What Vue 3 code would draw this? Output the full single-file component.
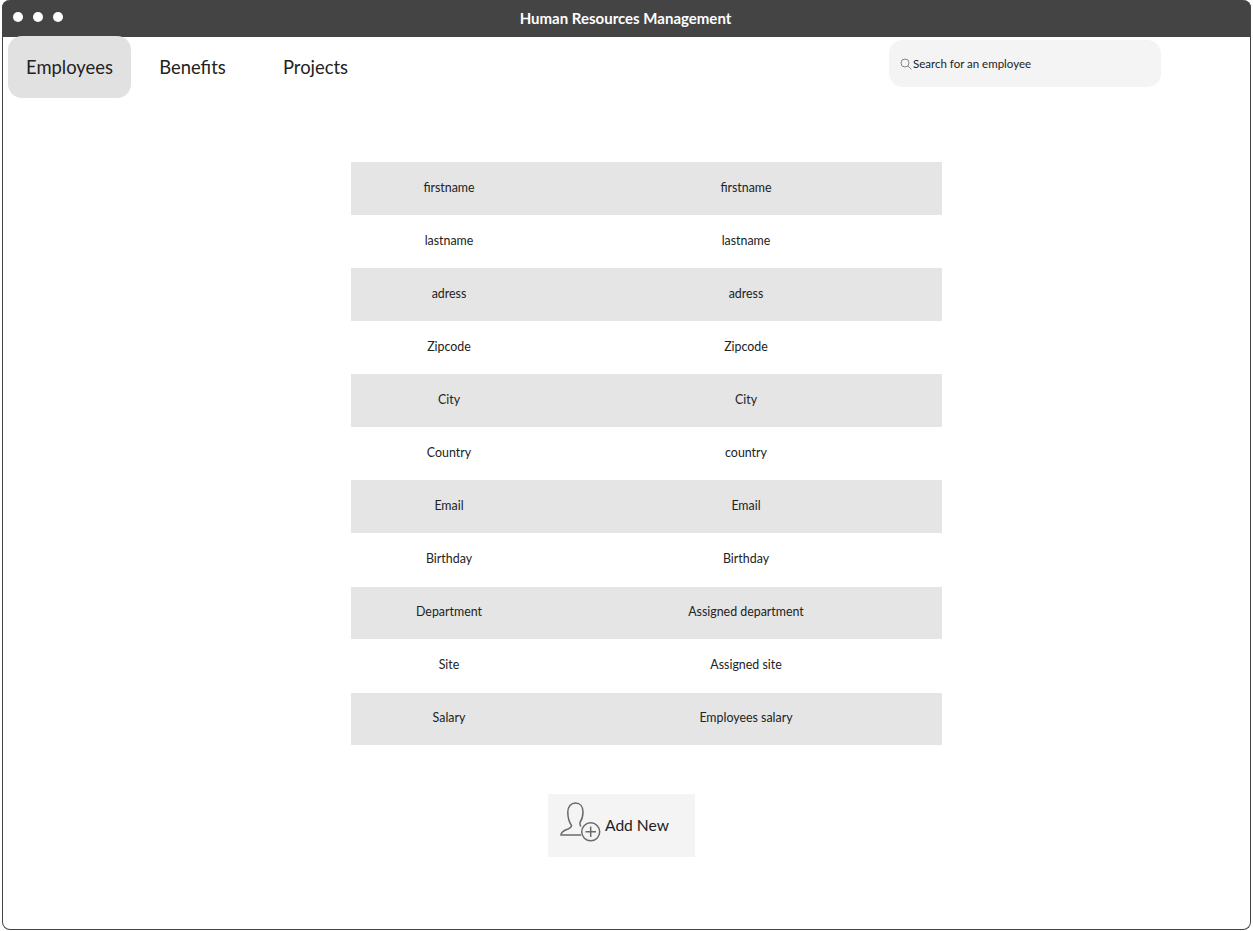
<script setup>
const tabs = ["Employees", "Benefits", "Projects"]

const rows = [
  ["firstname", "firstname"],
  ["lastname", "lastname"],
  ["adress", "adress"],
  ["Zipcode", "Zipcode"],
  ["City", "City"],
  ["Country", "country"],
  ["Email", "Email"],
  ["Birthday", "Birthday"],
  ["Department", "Assigned department"],
  ["Site", "Assigned site"],
  ["Salary", "Employees salary"]
]
</script>

<template>
  <div class="window">
    <header class="titlebar">
      <div class="dots">
        <span class="dot"></span>
        <span class="dot"></span>
        <span class="dot"></span>
      </div>
      <h1 class="title">Human Resources Management</h1>
    </header>

    <nav class="nav">
      <a v-for="(tab, index) in tabs" :key="tab" class="tab" :class="{ active: index === 0 }">{{ tab }}</a>
      <div class="search">
        <svg class="search-icon" width="12" height="12" viewBox="0 0 12 12" fill="none" stroke="#888" stroke-width="1">
          <circle cx="5" cy="5" r="4" />
          <path d="M8 8l3.500 3.500" />
        </svg>
        <span>Search for an employee</span>
      </div>
    </nav>

    <section class="details">
      <div v-for="row in rows" :key="row[0]" class="row">
        <span>{{ row[0] }}</span>
        <span>{{ row[1] }}</span>
      </div>
    </section>

    <button class="add-new">
      <svg class="add-icon" width="42" height="42" viewBox="0 0 42 42" fill="none" stroke="#6a6a6a" stroke-width="1.5">
        <path d="M21 33H1C1 30 3.500 28.500 8 27C10.500 26 11.500 25 11.500 23.500C9 20 7.800 15 7.800 10C7.800 4.500 11 1 15.500 1C20 1 23 4.500 23 10C23 14 22 17.500 20 20.500C19.700 22 20 23.500 21 24.500" />
        <circle cx="30.700" cy="29.800" r="9" />
        <path d="M25.500 29.800H36M30.700 24.500V35" />
      </svg>
      <span>Add New</span>
    </button>
  </div>
</template>

<style>
html,
body {
  background: #fff;
}
</style>

<style scoped>
.window {
  box-sizing: border-box;
  height: 930px;
  margin-left: 2px;
  margin-right: 2px;
  border: 1px solid #444;
  border-top: none;
  border-radius: 8px;
  font-family: "Lato", "Liberation Sans", sans-serif;
  color: #222;
  background: #fff;
}

.titlebar {
  position: relative;
  height: 37px;
  margin: 0 -1px;
  background: #444;
  border-radius: 8px 8px 0 0;
  display: flex;
  align-items: center;
  justify-content: center;
}

.dots {
  position: absolute;
  left: 11px;
  top: 12px;
  display: flex;
  gap: 10px;
}

.dot {
  width: 10px;
  height: 10px;
  border-radius: 50%;
  background: #fff;
}

.title {
  margin: 0 2px 1px 0;
  font-size: 15px;
  font-weight: 700;
  color: #fff;
}

.nav {
  display: flex;
  align-items: flex-start;
  padding-left: 5px;
  margin-top: -1px;
}

.tab {
  position: relative;
  box-sizing: border-box;
  width: 123px;
  height: 62px;
  display: flex;
  align-items: center;
  justify-content: center;
  border-radius: 14px;
  font-size: 18.400px;
}

.tab.active {
  background: #e1e1e1;
}

.search {
  box-sizing: border-box;
  width: 272px;
  height: 47px;
  margin-top: 4px;
  margin-left: auto;
  margin-right: 89px;
  padding-left: 11px;
  display: flex;
  align-items: center;
  gap: 1px;
  background: #f4f4f4;
  border-radius: 14px;
  font-size: 11.500px;
}

.details {
  width: 591px;
  margin-top: 64px;
  margin-left: 348px;
  display: flex;
  flex-direction: column;
  gap: 0.570px;
}

.row {
  box-sizing: border-box;
  height: 52.500px;
  padding-bottom: 2.400px;
  display: grid;
  grid-template-columns: 196px 392px;
  gap: 3px;
  align-items: center;
  justify-items: center;
  font-size: 12.400px;
}

.row:nth-child(odd) {
  background: #e5e5e5;
}

.add-new {
  width: 147px;
  height: 63px;
  margin-top: 48.800px;
  margin-left: 545px;
  padding: 0 0 0 12px;
  display: flex;
  align-items: center;
  gap: 3px;
  border: none;
  background: #f4f4f4;
  font-family: inherit;
  font-size: 15.600px;
  color: #222;
}

.add-icon {
  margin-top: -5px;
}
</style>
